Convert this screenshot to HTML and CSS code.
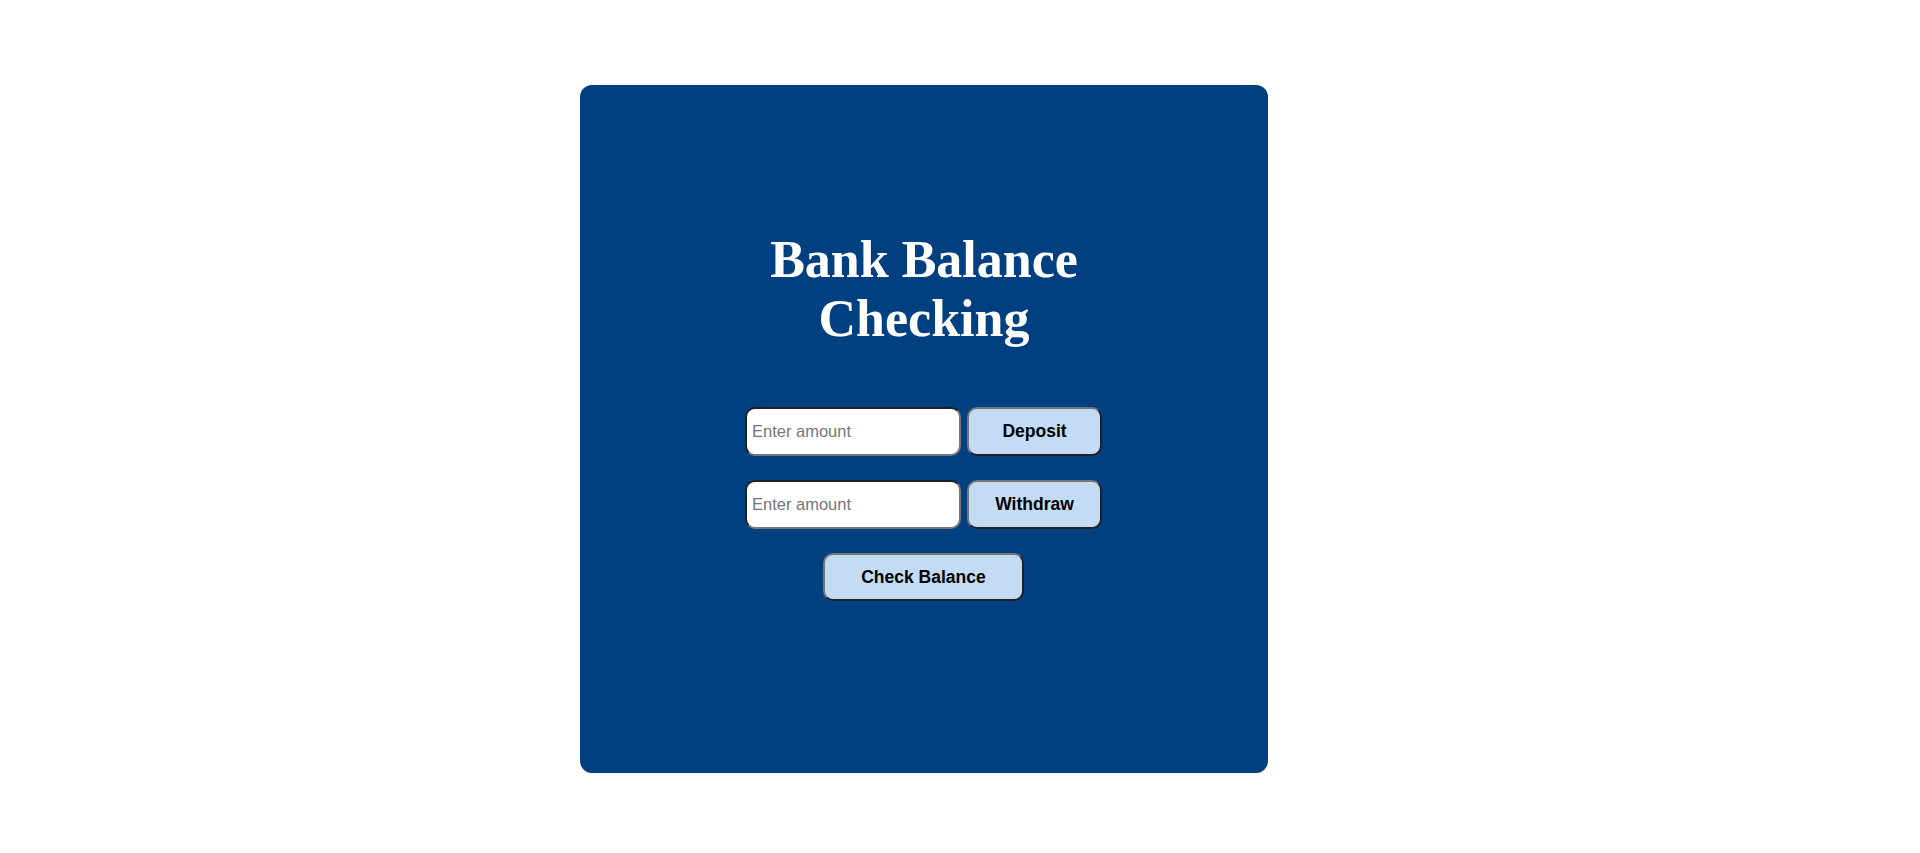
FILE: index.html
```html
<!DOCTYPE html>
<html lang="en">
<head>
<meta charset="utf-8">
<title>Bank Balance Checking</title>
<link rel="stylesheet" href="styles.css">
</head>
<body>
<div class="page">
  <div class="card">
    <h1 class="title">Bank Balance Checking</h1>
    <div class="row">
      <input class="amount" type="text" placeholder="Enter amount">
      <button class="btn">Deposit</button>
    </div>
    <div class="row">
      <input class="amount" type="text" placeholder="Enter amount">
      <button class="btn">Withdraw</button>
    </div>
    <div class="row">
      <button class="btn btn-wide">Check Balance</button>
    </div>
  </div>
</div>
</body>
</html>
```

FILE: styles.css
```css
html, body {
  margin: 0;
  padding: 0;
  background: #ffffff;
}

.page {
  padding: 85px 0 0 580px;
}

.card {
  width: 688px;
  height: 688px;
  box-sizing: border-box;
  background: #003f80;
  border-radius: 12px;
  padding-top: 145px;
  display: flex;
  flex-direction: column;
  align-items: center;
}

.title {
  margin: 0 0 59px 0;
  max-width: 450px;
  text-align: center;
  color: #ffffff;
  font-family: "Liberation Serif", "Times New Roman", serif;
  font-weight: bold;
  font-size: 52px;
  line-height: normal;
}

.row {
  display: flex;
  gap: 6px;
  justify-content: center;
  margin-bottom: 24px;
  margin-right: 1px;
}

.amount {
  width: 216px;
  height: 49px;
  box-sizing: border-box;
  border: 2px inset #767676;
  border-radius: 10px;
  padding: 0 5px;
  background: #ffffff;
  font-family: "Liberation Sans", Arial, sans-serif;
  font-size: 16.5px;
  color: #000000;
}

.amount::placeholder {
  color: #757575;
}

.btn {
  width: 135px;
  height: 49px;
  box-sizing: border-box;
  border: 2px outset #767676;
  border-radius: 10px;
  background: #c3dbf3;
  color: #000000;
  font-family: "Liberation Sans", Arial, sans-serif;
  font-weight: bold;
  font-size: 17.5px;
  padding: 0;
}

.btn-wide {
  width: 201px;
  height: 48px;
}
```
